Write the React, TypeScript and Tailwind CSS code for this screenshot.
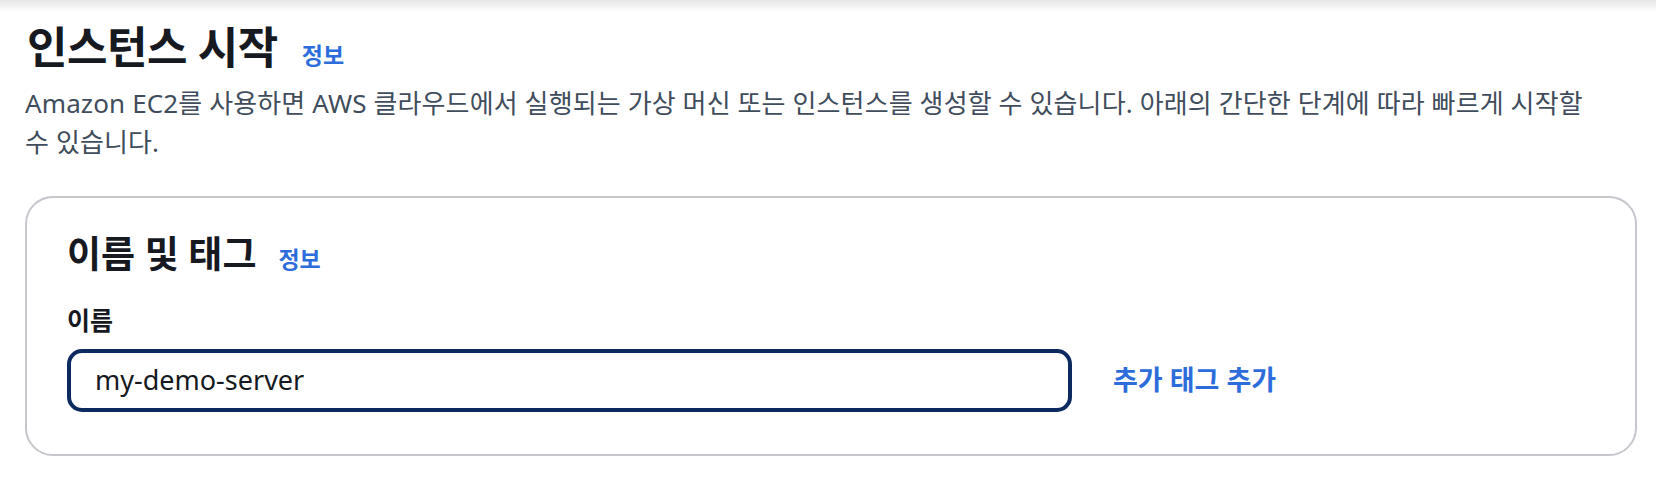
import React from "react";

const FONT = '"Noto Sans", "Noto Sans CJK KR", sans-serif';

export default function App() {
  return (
    <div
      className="w-[1656px] h-[482px] bg-white overflow-hidden text-[#16191f]"
      style={{ fontFamily: FONT }}
    >
      <div className="h-[12px] bg-gradient-to-b from-[#e6e6e8] to-white" />
      <div className="pl-[25px] pr-[19px]">
        <div className="flex items-baseline gap-[24px] mt-[8px]">
          <h1 className="text-[44px] font-bold leading-[54px] tracking-[-0.5px] pl-[2px]">인스턴스 시작</h1>
          <a className="text-[23px] font-bold text-[#2d6ddb] leading-[28px]">정보</a>
        </div>
        <p className="text-[26px] leading-[39px] tracking-[0.12px] text-[#414d5c] mt-[10px]">
          Amazon EC2를 사용하면 AWS 클라우드에서 실행되는 가상 머신 또는 인스턴스를 생성할 수 있습니다. 아래의 간단한 단계에 따라 빠르게 시작할
          <br />
          수 있습니다.
        </p>
        <div className="mt-[34px] border-2 border-[#c6c6cd] rounded-[28px] pl-[40px] pr-[40px] pt-[34px] pb-[42px]">
          <div className="flex items-baseline gap-[22px]">
            <h2 className="text-[37px] font-bold leading-[44px]">이름 및 태그</h2>
            <a className="text-[23px] font-bold text-[#2d6ddb] leading-[28px]">정보</a>
          </div>
          <div className="mt-[28px] text-[25px] font-bold leading-[32px]">이름</div>
          <div className="mt-[13px] flex items-center gap-[41px]">
            <div className="w-[1005px] h-[63px] border-[4px] border-[#0c2a60] rounded-[15px] flex items-center pl-[24px]">
              <span className="text-[27px] text-[#16191f]">my-demo-server</span>
            </div>
            <a className="text-[27px] font-bold text-[#2d6ddb]">추가 태그 추가</a>
          </div>
        </div>
      </div>
    </div>
  );
}
